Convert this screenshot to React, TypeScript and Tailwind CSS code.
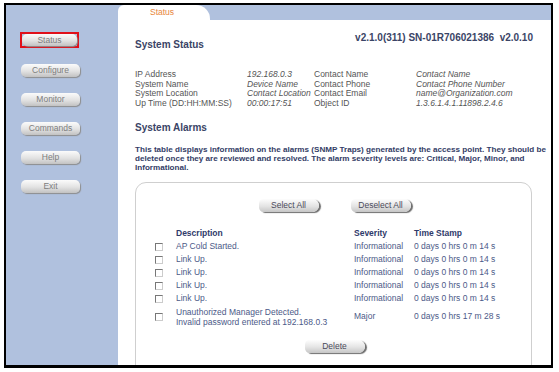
const NAV = ["Configure", "Monitor", "Commands", "Help", "Exit"];

const INFO = [
  ["IP Address", "192.168.0.3", "Contact Name", "Contact Name"],
  ["System Name", "Device Name", "Contact Phone", "Contact Phone Number"],
  ["System Location", "Contact Location", "Contact Email", "name@Organization.com"],
  ["Up Time (DD:HH:MM:SS)", "00:00:17:51", "Object ID", "1.3.6.1.4.1.11898.2.4.6"],
];

const ALARMS = [
  { desc: ["AP Cold Started."], sev: "Informational", time: "0 days 0 hrs 0 m 14 s" },
  { desc: ["Link Up."], sev: "Informational", time: "0 days 0 hrs 0 m 14 s" },
  { desc: ["Link Up."], sev: "Informational", time: "0 days 0 hrs 0 m 14 s" },
  { desc: ["Link Up."], sev: "Informational", time: "0 days 0 hrs 0 m 14 s" },
  { desc: ["Link Up."], sev: "Informational", time: "0 days 0 hrs 0 m 14 s" },
  {
    desc: ["Unauthorized Manager Detected.", "Invalid password entered at 192.168.0.3"],
    sev: "Major",
    time: "0 days 0 hrs 17 m 28 s",
  },
];

function NavButton({ label, wide }: { label: string; wide?: boolean }) {
  return (
    <div
      className={`${wide ? "w-[55px] h-[12px]" : "w-[59px] h-[13px] ml-[1px]"} flex items-center justify-center rounded-[5px] bg-[linear-gradient(to_bottom,#fbfbfb,#e2e2e2_55%,#c2c2c2)] shadow-[1px_1px_1px_#8d8d8d] text-[8.5px] text-[#7d7d7d]`}
    >
      {label}
    </div>
  );
}

function PageButton({ label }: { label: string }) {
  return (
    <button className="w-[60px] h-[13px] flex items-center justify-center rounded-l-[5px] rounded-r-[7px] bg-[linear-gradient(to_bottom,#fdfdfd,#e4e4e4_55%,#c6c6c6)] shadow-[2px_1px_1px_#6e6e6e] text-[8.5px] text-[#4a4a5a] leading-none">
      {label}
    </button>
  );
}

function Checkbox() {
  return (
    <span className="block w-[8px] h-[8px] border border-t-[#777] border-l-[#777] border-r-[#ccc] border-b-[#ccc] bg-white" />
  );
}

export default function App() {
  return (
    <div className="w-[559px] h-[372px] bg-white pl-[4px] pt-[3px] font-['Liberation_Sans',Arial,sans-serif] overflow-hidden">
      <div className="w-[549px] h-[365px] border-2 border-b-[3px] border-black flex overflow-hidden">
        {/* sidebar */}
        <div className="w-[112px] shrink-0 bg-[#b0c1de] pl-[14px] pt-[27px] flex flex-col gap-[16px]">
          <div className="w-[59px] h-[16px] border-2 border-[#e0101a] flex items-center justify-center">
            <NavButton label="Status" wide />
          </div>
          {NAV.map((n) => (
            <NavButton key={n} label={n} />
          ))}
        </div>

        {/* main */}
        <div className="flex-1 flex flex-col min-w-0">
          <div className="h-[20px] bg-[#b0c1de] flex items-end">
            <div className="w-[92px] h-[15px] bg-white rounded-tl-[6px] rounded-tr-[14px] pl-[32px] text-[8.5px] leading-[15px] text-[#e8863a]">
              Status
            </div>
          </div>

          <div className="flex-1 bg-white pl-[17px] pr-[18px] text-[#3b4668]">
            <div className="flex items-start">
              <div className="mt-[19px] text-[10px] font-bold leading-[12px] text-[#3a4466]">
                System Status
              </div>
              <div className="ml-auto mt-[12px] text-[10px] font-bold leading-[12px] whitespace-pre text-[#3a4466]">
                {"v2.1.0(311) SN-01R706021386  v2.0.10"}
              </div>
            </div>

            <div className="mt-[19px] grid grid-cols-[112px_67px_102px_auto] text-[8.5px] leading-[9.5px] text-[#555]">
              {INFO.map((r) => (
                <div key={r[0]} className="contents">
                  <span>{r[0]}</span>
                  <span className="italic whitespace-nowrap">{r[1]}</span>
                  <span>{r[2]}</span>
                  <span className="italic">{r[3]}</span>
                </div>
              ))}
            </div>

            <div className="mt-[14px] text-[10px] font-bold leading-[12px] text-[#3a4466]">
              System Alarms
            </div>

            <p className="mt-[11px] w-[412px] text-[8.1px] font-bold leading-[9px] text-[#333c66]">
              This table displays information on the alarms (SNMP Traps) generated by the access point. They should be deleted once they are reviewed and resolved. The alarm severity levels are: Critical, Major, Minor, and Informational.
            </p>

            <div className="mt-[10px] mr-[1px] h-[200px] border border-[#cfcfcf] rounded-t-[11px] pt-[16px]">
              <div className="flex justify-center gap-[32px] pl-[2px]">
                <PageButton label="Select All" />
                <PageButton label="Deselect All" />
              </div>

              <div className="mt-[15px] pl-[19px] grid grid-cols-[21px_178px_60px_auto] text-[8.5px] leading-[13px] text-[#4c5a88]">
                <span />
                <span className="font-bold text-[#2f3a6a]">Description</span>
                <span className="font-bold text-[#2f3a6a]">Severity</span>
                <span className="font-bold text-[#2f3a6a]">Time Stamp</span>
                {ALARMS.map((a, i) => (
                  <div key={i} className="contents">
                    <span className="flex items-center">
                      <Checkbox />
                    </span>
                    <span className={a.desc.length > 1 ? "leading-[10px] py-[1.5px]" : ""}>
                      {a.desc.map((d) => (
                        <span key={d} className="block whitespace-nowrap">
                          {d}
                        </span>
                      ))}
                    </span>
                    <span className="flex items-center">{a.sev}</span>
                    <span className="flex items-center whitespace-nowrap">{a.time}</span>
                  </div>
                ))}
              </div>

              <div className="mt-[12px] flex justify-center pl-[2px]">
                <PageButton label="Delete" />
              </div>
            </div>
          </div>
        </div>
      </div>
    </div>
  );
}
